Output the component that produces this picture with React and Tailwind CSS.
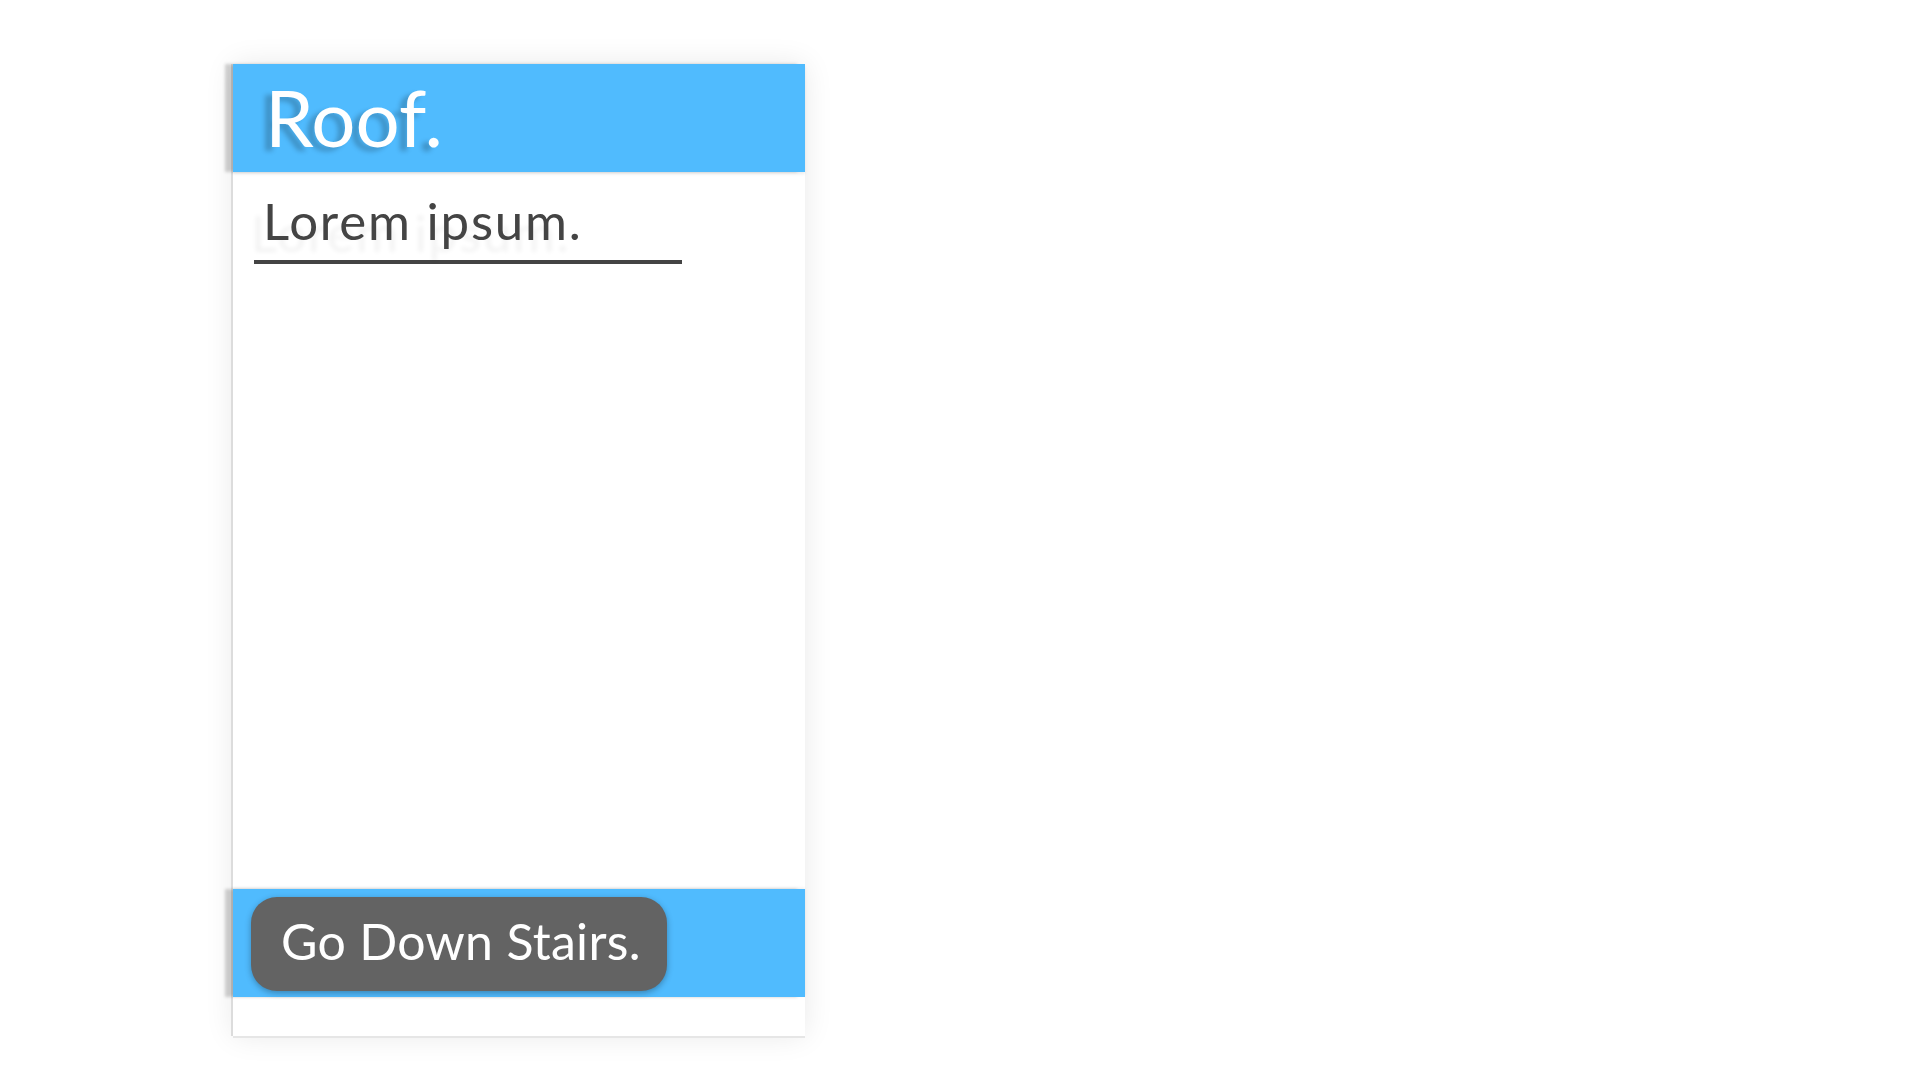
import React from 'react';

const font = { fontFamily: 'Lato, "Open Sans", sans-serif' };

const Header = () => (
  <div className="h-[108px] shrink-0 bg-[#50bbfe] pl-[32px] pt-[14px] shadow-[-8px_0_3px_rgba(0,0,0,0.18),0_2px_3px_rgba(0,0,0,0.08)]">
    <h1 className="text-[78px] leading-none font-normal text-white [text-shadow:-7px_4px_5px_rgba(0,0,0,0.22)]">
      Roof.
    </h1>
  </div>
);

const Footer = () => (
  <div className="h-[108px] shrink-0 bg-[#50bbfe] pt-[8px] pl-[18px] shadow-[-8px_0_3px_rgba(0,0,0,0.18),0_-1px_3px_rgba(0,0,0,0.08)]">
    <button className="h-[94px] w-[416px] rounded-[26px] bg-[#636363] pb-[6px] pl-[30px] text-left text-[50px] leading-none tracking-[0.3px] text-white shadow-[0_2px_6px_rgba(0,0,0,0.3)]">
      Go Down Stairs.
    </button>
  </div>
);

export default function App() {
  return (
    <div className="min-h-screen bg-white pt-16 pl-[233px]" style={font}>
      <div className="flex h-[972px] w-[572px] flex-col bg-white shadow-[-2px_0_0_#dcdcdc,0_2px_0_#e6e6e6,0_0_28px_rgba(0,0,0,0.09)]">
        <Header />

        {/* body */}
        <div className="flex-1 pt-[23px]">
          <div className="ml-[21px] w-[428px] border-b-4 border-[#444] pb-[14px] pl-[9px]">
            <span className="text-[51px] leading-none tracking-[1.8px] text-[#444] [text-shadow:-12px_12px_4px_rgba(0,0,0,0.05)]">
              Lorem ipsum.
            </span>
          </div>
        </div>

        <Footer />
        <div className="h-[39px] shrink-0" />
      </div>
    </div>
  );
}
